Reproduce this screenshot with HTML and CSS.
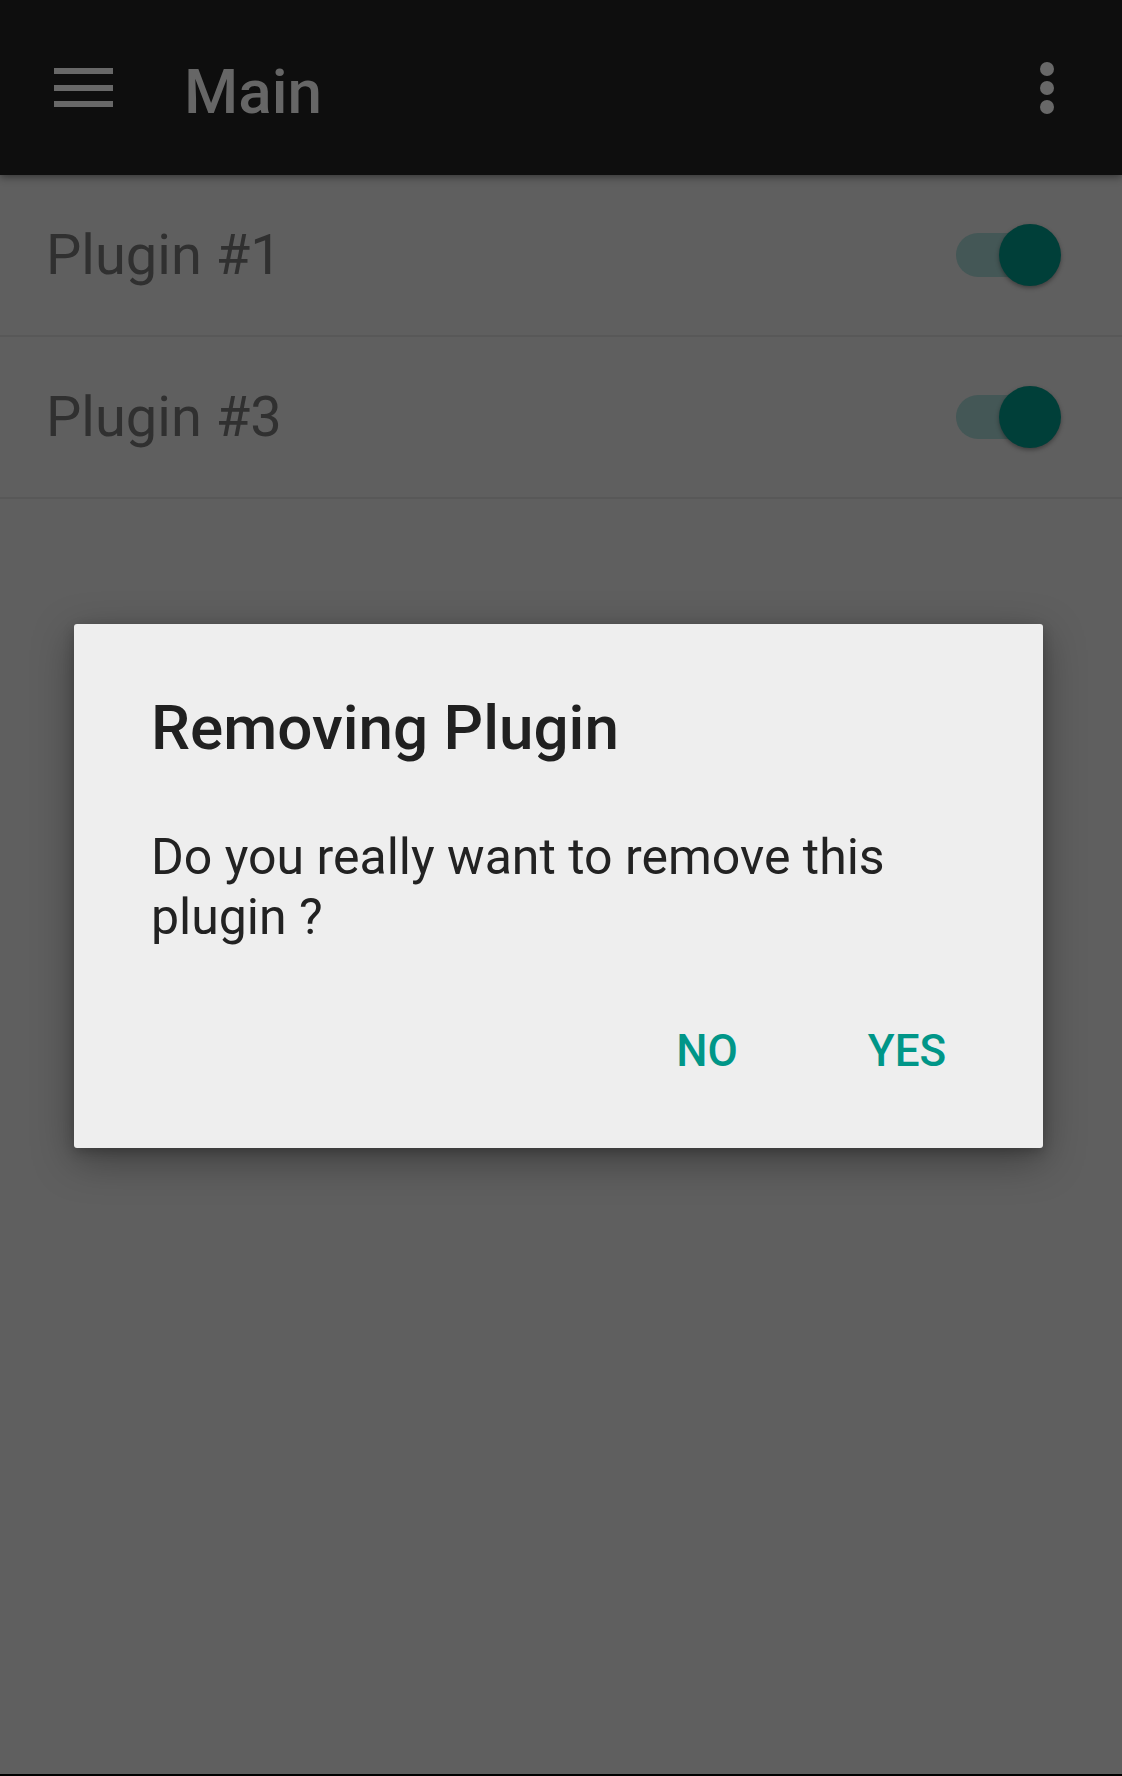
FILE: index.html
```html
<!DOCTYPE html>
<html lang="en">
<head>
<meta charset="utf-8">
<title>Main</title>
<link rel="stylesheet" href="styles.css">
</head>
<body>
<div class="screen">
  <header class="toolbar">
    <svg class="menu-icon" width="59" height="39" viewBox="0 0 59 39" aria-hidden="true">
      <rect x="0" y="0" width="59" height="6" fill="#686868"/>
      <rect x="0" y="17" width="59" height="6" fill="#686868"/>
      <rect x="0" y="33" width="59" height="6" fill="#686868"/>
    </svg>
    <div class="title">Main</div>
    <svg class="more-icon" width="14" height="52" viewBox="0 0 14 52" aria-hidden="true">
      <circle cx="7" cy="7" r="7" fill="#686868"/>
      <circle cx="7" cy="26" r="7" fill="#686868"/>
      <circle cx="7" cy="45" r="7" fill="#686868"/>
    </svg>
  </header>
  <main class="list">
    <div class="row">
      <span class="row-label">Plugin #1</span>
      <span class="switch"><span class="track"></span><span class="thumb"></span></span>
    </div>
    <div class="row">
      <span class="row-label">Plugin #3</span>
      <span class="switch"><span class="track"></span><span class="thumb"></span></span>
    </div>
  </main>
  <div class="bottom-edge"></div>

  <div class="dialog" role="dialog">
    <h2 class="dialog-title">Removing Plugin</h2>
    <p class="dialog-body">Do you really want to remove this plugin ?</p>
    <div class="dialog-actions">
      <button class="btn">NO</button>
      <button class="btn">YES</button>
    </div>
  </div>
</div>
</body>
</html>
```

FILE: styles.css
```css
html, body {
  margin: 0;
  padding: 0;
}
body {
  background: #5f5f5f;
  font-family: "Roboto", "Noto Sans", sans-serif;
}
.screen {
  position: relative;
  width: 1122px;
  height: 1776px;
  display: flex;
  flex-direction: column;
  overflow: hidden;
}
.toolbar {
  position: relative;
  z-index: 2;
  height: 175px;
  flex: 0 0 175px;
  background: #0e0e0e;
  display: flex;
  align-items: center;
  padding: 0 68px 0 54px;
  box-shadow: 0 2px 8px rgba(0, 0, 0, 0.45);
}
.menu-icon {
  display: block;
  margin-top: -1px;
}
.title {
  margin-left: 71px;
  padding-top: 7px;
  font-size: 62px;
  font-weight: 500;
  color: #666666;
  flex: 1;
}
.more-icon {
  display: block;
  margin-top: 1px;
}
.list {
  flex: 1;
  display: flex;
  flex-direction: column;
}
.row {
  height: 160px;
  display: flex;
  align-items: center;
  justify-content: space-between;
  padding: 0 61px 0 46px;
  border-bottom: 2px solid #585858;
}
.row-label {
  font-size: 56px;
  color: #303030;
}
.switch {
  position: relative;
  width: 105px;
  height: 62px;
  display: block;
}
.track {
  position: absolute;
  left: 0;
  top: 9px;
  width: 86px;
  height: 44px;
  border-radius: 22px;
  background: #445756;
}
.thumb {
  position: absolute;
  right: 0;
  top: 0;
  width: 62px;
  height: 62px;
  border-radius: 50%;
  background: #003f39;
  box-shadow: 0 2px 4px rgba(0, 0, 0, 0.35);
}
.bottom-edge {
  height: 2px;
  flex: 0 0 2px;
  background: #000;
}
.dialog {
  position: absolute;
  top: 624px;
  left: 74px;
  width: 969px;
  height: 524px;
  box-sizing: border-box;
  padding: 68px 92px 0 77px;
  background: #eeeeee;
  border-radius: 3px;
  box-shadow: 0 12px 40px rgba(0, 0, 0, 0.35), 0 4px 12px rgba(0, 0, 0, 0.2);
  z-index: 5;
  display: flex;
  flex-direction: column;
}
.dialog-title {
  margin: 0;
  font-size: 62px;
  line-height: 72px;
  font-weight: 500;
  color: #202020;
}
.dialog-body {
  margin: 63px 0 0 0;
  font-size: 50px;
  line-height: 60px;
  color: #222222;
}
.dialog-actions {
  margin: 48px -92px 0 -77px;
  padding-right: 36px;
  display: flex;
  justify-content: flex-end;
}
.btn {
  width: 200px;
  height: 112px;
  line-height: 112px;
  padding: 0;
  border: 0;
  background: transparent;
  font-family: "Roboto", "Noto Sans", sans-serif;
  font-size: 44px;
  font-weight: 500;
  color: #009688;
  text-align: center;
}
```
